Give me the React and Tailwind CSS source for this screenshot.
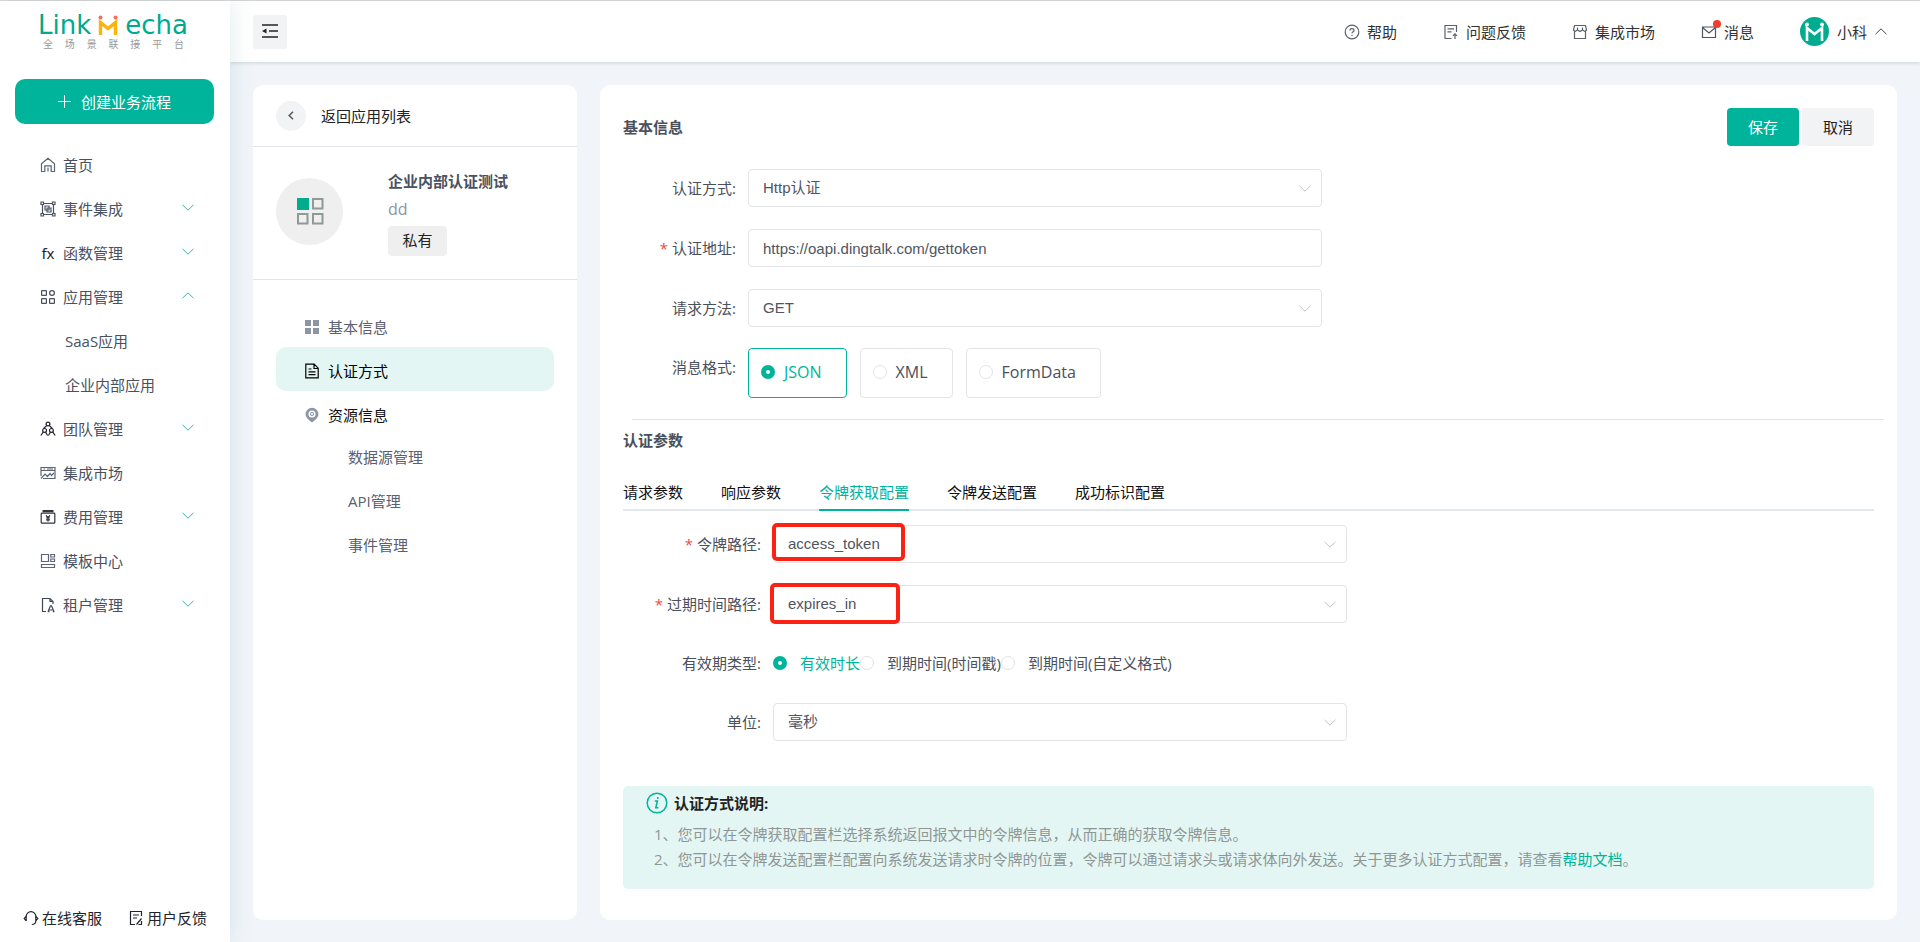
import { useState } from 'react';

const teal = '#00b39b';

function Svg({ size = 16, box = 16, className = '', children }) {
  return (
    <svg
      width={size}
      height={size}
      viewBox={`0 0 ${box} ${box}`}
      fill="none"
      stroke="currentColor"
      strokeWidth="1.2"
      className={`shrink-0 ${className}`}
      aria-hidden="true"
    >
      {children}
    </svg>
  );
}

const HomeIcon = () => (
  <Svg className="text-[#5b6577]">
    <path d="M1.500 6.800 8 1.200l6.500 5.600V14.500H11.200V8.800H4.800V14.500H1.500zM8 10.500v4" />
  </Svg>
);

const EventIcon = () => (
  <Svg className="text-[#4a5262]">
    <path d="M2.500 3v10M13.500 3v10M3 2.500h10M3 13.500h10" />
    <path d="M1 1h2.500v2.500H1zM12.500 1H15v2.500h-2.500zM1 12.500h2.500V15H1zM12.500 12.500H15V15h-2.500z" />
    <path d="M5 5h4v4H5zM7 7h4v4H7z" />
  </Svg>
);

const FxIcon = () => (
  <span className="w-4 shrink-0 text-center font-['Noto_Sans','Open_Sans',sans-serif] text-[15px] leading-4 text-[#1f2330]">
    fx
  </span>
);

const AppsIcon = () => (
  <Svg className="text-[#4a4f5a]">
    <rect x="1.600" y="1.600" width="4.800" height="4.800" rx="0.500" />
    <circle cx="12" cy="4" r="2.400" />
    <rect x="1.600" y="9.600" width="4.800" height="4.800" rx="0.500" />
    <rect x="9.600" y="9.600" width="4.800" height="4.800" rx="0.500" />
  </Svg>
);

const TeamIcon = () => (
  <Svg className="text-[#20242e]">
    <circle cx="8" cy="3" r="1.900" />
    <circle cx="4.600" cy="9.400" r="1.900" />
    <circle cx="11.400" cy="9.400" r="1.900" />
    <path d="M6.600 4.600 3.600 7.500M9.400 4.600l3 2.900M.8 14.500l2.600-3.700M7.600 14.500l-2-3.300M8.400 14.500l2-3.300M15.200 14.500l-2.600-3.700" />
  </Svg>
);

const MarketIcon = () => (
  <Svg className="text-[#5b6577]">
    <path d="M1 11V2.500h14v11H3M1 5.500h14M3.500 4h1.500M7 4h6" />
    <path d="m1 13.500 4-4.500 2.500 2.500L10 8.500l1.500 2L14 8" />
  </Svg>
);

const FeeIcon = () => (
  <Svg className="text-[#30343e]">
    <path d="M2.500 1.500h11M2.500 2.600h11" />
    <rect x="1.200" y="4.200" width="13.600" height="10" rx="0.800" />
    <path d="m6 6.500 2 2 2-2M8 8.500V12.500M6 9h4M6 10.800h4" />
  </Svg>
);

const TemplateIcon = () => (
  <Svg className="text-[#5b6577]">
    <path d="M1.500 1.500h7v7h-7zM10.800 1.500h3.700v2.500h-3.700zM10.800 6h3.700v2.500h-3.700zM1.500 11.500h13v3h-13z" />
  </Svg>
);

const TenantIcon = () => (
  <Svg className="text-[#3f4656]">
    <path d="M6 14.500H2.500v-13H10l3 3V7M10 1.500V4.500h3" />
    <path d="m8 14.800 2.500-6h1l2.500 6M9 13h4M8 14.600h1.500M12.800 14.600h1.700" />
  </Svg>
);

const HelpIcon = () => (
  <Svg className="text-[#59636b]">
    <circle cx="8" cy="8" r="6.800" />
    <path d="M6 6.400C6 4 10 4 10 6.400c0 1.300-2 1.400-2 2.900M8 10.800v1.200" />
  </Svg>
);

const NoteIcon = () => (
  <Svg className="text-[#59636b]">
    <path d="M8.500 14.500H2v-13h11.500V8M4.500 4.800h6.500M4.500 7.800h4M12 9.800V15M10 11.800l2-2 2 2" />
  </Svg>
);

const ShopIcon = () => (
  <Svg className="text-[#59636b]">
    <path d="M2.500 7.500v7h11v-7M2.500 1.500h11L14.500 6l-1.500 1.500L10.500 6 8 7.500 5.500 6 3 7.500 1.500 6zM5.500 3.500V6M10.500 3.500V6" />
  </Svg>
);

const MailIcon = () => (
  <Svg className="text-[#4b5563]">
    <path d="M1.500 3h13v10.500h-13zM1.500 3.500 8 9l6.500-5.500" />
  </Svg>
);

const HeadsetIcon = () => (
  <Svg className="text-[#20242e]">
    <path d="M3.200 11V6.500a4.800 4.800 0 0 1 9.600 0V11c0 2-1.500 3.500-4 3.500M3.200 6 1.200 8.500l2 2.500M12.800 6l2 2.500-2 2.500" />
  </Svg>
);

const FeedbackIcon = () => (
  <Svg className="text-[#20242e]">
    <path d="M13.500 6V1.500h-11v13H7M5 5h6M5 8h4M8.500 14.500l5-6M10.500 14.500h3V11" />
  </Svg>
);

const GridIcon = () => (
  <Svg className="text-[#8b95a5]">
    <path d="M1 1h6v6H1zM9 1h6v6H9zM1 9h6v6H1zM9 9h6v6H9z" fill="currentColor" stroke="none" />
  </Svg>
);

const DocIcon = () => (
  <Svg className="text-black">
    <path d="M1.800 1.200h8.400l4 4v9.600H1.800zM10 1.200v4.300h4.200M4.500 6h3M4.500 8.800h7M4.500 11.600h7" />
  </Svg>
);

const PinIcon = () => (
  <Svg>
    <path
      d="M8 .8a6.400 6.400 0 0 0-6.400 6.400C1.600 10.500 4.500 12.500 8 15.500c3.500-3 6.400-5 6.400-8.300A6.400 6.400 0 0 0 8 .8z"
      fill="#8b95a5"
      stroke="none"
    />
    <circle cx="8" cy="7" r="2.800" fill="#8b95a5" stroke="#fff" strokeWidth="1.600" />
    <circle cx="8" cy="7" r="1" fill="#fff" stroke="none" />
  </Svg>
);

function Chevron({ up = false, className = '' }) {
  return (
    <svg width="12" height="7" viewBox="0 0 12 7" fill="none" stroke="currentColor" className={`shrink-0 ${className}`} aria-hidden="true">
      <path d={up ? 'M.5 6.200 6 .8l5.500 5.400' : 'M.5.8 6 6.200 11.500.8'} />
    </svg>
  );
}

function Logo() {
  return (
    <div className="ml-[38px] w-[150px]">
      <div className="flex h-6 items-end justify-between font-['DejaVu_Sans',sans-serif] text-[26px] leading-6 text-[#00a98f]">
        <span>Link</span>
        <svg width="20" height="20" viewBox="0 0 20 20" fill="none" className="mb-[2px] shrink-0" aria-hidden="true">
          <path d="M2.500 20V7.500l7.500 6 7.500-6V20" stroke="#f9b50b" strokeWidth="3.400" />
          <circle cx="2.500" cy="2.500" r="2" fill="#f4705c" />
          <circle cx="17.500" cy="2.500" r="2" fill="#f4705c" />
        </svg>
        <span>echa</span>
      </div>
      <div className="mt-px mr-1 ml-[5px] flex justify-between text-[10px] leading-3 text-[#999]">
        {['全', '场', '景', '联', '接', '平', '台'].map((c) => (
          <span key={c}>{c}</span>
        ))}
      </div>
    </div>
  );
}

const menu = [
  { label: '首页', icon: HomeIcon },
  { label: '事件集成', icon: EventIcon, arrow: 'down' },
  { label: '函数管理', icon: FxIcon, arrow: 'down' },
  { label: '应用管理', icon: AppsIcon, arrow: 'up', children: ['SaaS应用', '企业内部应用'] },
  { label: '团队管理', icon: TeamIcon, arrow: 'down' },
  { label: '集成市场', icon: MarketIcon },
  { label: '费用管理', icon: FeeIcon, arrow: 'down' },
  { label: '模板中心', icon: TemplateIcon },
  { label: '租户管理', icon: TenantIcon, arrow: 'down' },
];

function Sidebar() {
  return (
    <aside className="relative z-10 flex w-[230px] shrink-0 flex-col bg-white pt-3 shadow-[0_0_24px_rgba(0,80,90,0.12)]">
      <Logo />
      <button className="mr-4 ml-[15px] mt-[29px] flex h-[45px] items-center justify-center gap-[10px] rounded-[10px] bg-[#00b39b] text-white">
        <svg width="13" height="13" viewBox="0 0 13 13" stroke="currentColor" aria-hidden="true">
          <path d="M6.500 0v13M0 6.500h13" />
        </svg>
        创建业务流程
      </button>
      <nav className="mt-[19px] text-[#495060]">
        {menu.map(({ label, icon: Icon, arrow, children }) => (
          <div key={label}>
            <a href="#" className="flex h-11 items-center pr-9 pl-10">
              <Icon />
              <span className="ml-[7px] flex-1">{label}</span>
              {arrow && <Chevron up={arrow === 'up'} className="mb-[3px] text-[#2fb8a4]" />}
            </a>
            {children?.map((c) => (
              <a key={c} href="#" className="flex h-11 items-center pl-[65px]">
                {c}
              </a>
            ))}
          </div>
        ))}
      </nav>
      <div className="mt-auto flex justify-between px-[23px] pb-[13px] text-[#20242e]">
        <a href="#" className="flex items-center gap-[3px]">
          <HeadsetIcon />
          在线客服
        </a>
        <a href="#" className="flex items-center gap-[3px]">
          <FeedbackIcon />
          用户反馈
        </a>
      </div>
    </aside>
  );
}

function Header() {
  return (
    <header className="flex h-[61px] items-center justify-between bg-white pr-[33px] pl-[23px] shadow-[0_1px_4px_rgba(0,40,60,0.16)]">
      <button aria-label="收起菜单" className="flex size-[34px] items-center justify-center rounded-[3px] bg-[#f2f3f5] text-[#1f2329]">
        <svg width="18" height="14" viewBox="0 0 18 14" stroke="currentColor" strokeWidth="1.600" className="mb-[2px]" aria-hidden="true">
          <path d="M1 1h16M8 7h9M1 13h16" />
          <path d="M5.500 4.500v5L1 7z" fill="currentColor" stroke="none" />
        </svg>
      </button>
      <div className="flex items-center gap-[46px] text-[#333]">
        <a href="#" className="flex items-center gap-[7px]">
          <HelpIcon />
          帮助
        </a>
        <a href="#" className="flex items-center gap-[7px]">
          <NoteIcon />
          问题反馈
        </a>
        <a href="#" className="flex items-center gap-[7px]">
          <ShopIcon />
          集成市场
        </a>
        <a href="#" className="relative flex items-center gap-[7px]">
          <MailIcon />
          消息
          <span className="absolute -top-px left-3 size-2 rounded-full bg-[#f03e2d]" />
        </a>
        <button className="flex items-center gap-2">
          <svg width="29" height="29" viewBox="0 0 29 29" fill="none" aria-hidden="true">
            <circle cx="14.500" cy="14.500" r="14.500" fill="#00ab8e" />
            <path d="M7 24V11l7.500 6 7.500-6v13" stroke="#fff" strokeWidth="2.600" />
            <circle cx="7" cy="7.500" r="1.900" fill="#fff" />
            <circle cx="22" cy="7.500" r="1.900" fill="#fff" />
          </svg>
          小科
          <Chevron up className="text-[#444]" />
        </button>
      </div>
    </header>
  );
}

function AppPanel() {
  return (
    <section className="w-[324px] shrink-0 rounded-[10px] bg-white">
      <div className="flex h-[62px] items-center gap-[15px] border-b border-[#e2e4ed] px-[23px] text-[#222]">
        <button aria-label="返回" className="flex size-[30px] items-center justify-center rounded-full bg-[#f2f3f5]">
          <svg width="6" height="9" viewBox="0 0 6 9" fill="none" stroke="#555d66" strokeWidth="1.600" aria-hidden="true">
            <path d="M5 .8 1.200 4.500 5 8.200" />
          </svg>
        </button>
        返回应用列表
      </div>
      <div className="flex h-[133px] items-center border-b border-[#e2e4ed] px-[23px] pb-1">
        <div className="flex size-[67px] items-center justify-center rounded-full bg-[#efefef]">
          <svg width="28" height="28" viewBox="0 0 28 28" fill="none" stroke="#8f9a97" strokeWidth="2" aria-hidden="true">
            <path d="M1 1h12v12H1z" fill="#00ab8e" stroke="none" />
            <path d="M17 2h9.500v9.500H17zM2 17h9.500v9.500H2zM17 17h9.500v9.500H17z" />
          </svg>
        </div>
        <div className="ml-[45px] pt-1">
          <h2 className="font-bold text-[#4a5162]">企业内部认证测试</h2>
          <p className="mt-[6px] text-base leading-[22px] text-[#8a94a6]">dd</p>
          <span className="mt-[6px] flex h-[30px] w-[59px] items-center justify-center rounded bg-[#efefef] pb-[2px] text-[#222]">私有</span>
        </div>
      </div>
      <nav className="px-[23px] pt-[23px] text-[#5a6070]">
        <a href="#" className="flex h-11 items-center gap-2 pt-1 pl-7">
          <GridIcon />
          基本信息
        </a>
        <a href="#" className="flex h-11 items-center gap-2 rounded-[10px] bg-[#e4f6f4] pt-1 pl-7 text-black">
          <DocIcon />
          认证方式
        </a>
        <a href="#" className="flex h-11 items-center gap-2 pt-1 pl-7 text-[#111]">
          <PinIcon />
          资源信息
        </a>
        {['数据源管理', 'API管理', '事件管理'].map((t) => (
          <a key={t} href="#" className="flex h-11 items-center pl-[72px]">
            {t}
          </a>
        ))}
      </nav>
    </section>
  );
}

const controlClass =
  "h-full w-full appearance-none rounded border border-[#e2e4e8] bg-white px-[14px] font-['Liberation_Sans','Noto_Sans_CJK_SC',sans-serif] text-[15px] text-[#50555f] outline-none";

function FormRow({ id, label, required, labelWidth, children }) {
  return (
    <div className="flex h-[38px] items-center">
      <label htmlFor={id} className={`${labelWidth} shrink-0 pr-3 text-right`}>
        {required && <span className="mr-1 text-[#f5483b]">*</span>}
        {label}:
      </label>
      {children}
    </div>
  );
}

function SelectBox({ id, value, children }) {
  return (
    <div className="relative h-[38px] w-[574px]">
      <select id={id} defaultValue={value} className={controlClass}>
        <option>{value}</option>
      </select>
      <Chevron className="pointer-events-none absolute top-4 right-[11px] text-[#bcc2cc]" />
      {children}
    </div>
  );
}

const radioClass =
  'size-[14px] shrink-0 appearance-none rounded-full border border-[#e0e3e8] bg-white checked:border-[5px] checked:border-[#00b39b]';

const tabs = ['请求参数', '响应参数', '令牌获取配置', '令牌发送配置', '成功标识配置'];

function AuthPanel() {
  const [format, setFormat] = useState('JSON');
  const [expire, setExpire] = useState('有效时长');
  const [tab, setTab] = useState('令牌获取配置');

  return (
    <section className="flex-1 rounded-[10px] bg-white px-[23px] pt-[23px] pb-[30px] text-[#4a505c]">
      <div className="flex h-[38px] items-center justify-between">
        <h2 className="font-bold">基本信息</h2>
        <div className="flex gap-[3px]">
          <button className="h-[38px] w-[72px] rounded bg-[#00b39b] text-white">保存</button>
          <button className="h-[38px] w-[72px] rounded bg-[#f2f3f5] text-[#222]">取消</button>
        </div>
      </div>

      <div className="mt-[23px] flex flex-col gap-[22px]">
        <FormRow id="auth" label="认证方式" labelWidth="w-[125px]">
          <SelectBox id="auth" value="Http认证" />
        </FormRow>
        <FormRow id="url" label="认证地址" required labelWidth="w-[125px]">
          <div className="h-[38px] w-[574px]">
            <input id="url" type="text" defaultValue="https://oapi.dingtalk.com/gettoken" className={controlClass} />
          </div>
        </FormRow>
        <FormRow id="method" label="请求方法" labelWidth="w-[125px]">
          <SelectBox id="method" value="GET" />
        </FormRow>
      </div>

      {/* Message format */}
      <div className="mt-[21px] flex">
        <span id="format-label" className="w-[125px] shrink-0 pt-2 pr-3 text-right">消息格式:</span>
        <div role="radiogroup" aria-labelledby="format-label" className="flex gap-[13px]">
          {['JSON', 'XML', 'FormData'].map((f) => (
            <label
              key={f}
              className={`flex h-[50px] items-center gap-[9px] rounded border pr-6 pb-[2px] pl-3 text-base ${
                format === f ? 'border-[#00b39b] text-[#00b39b]' : 'border-[#e2e4e8]'
              }`}
            >
              <input type="radio" name="format" checked={format === f} onChange={() => setFormat(f)} className={radioClass} />
              {f}
            </label>
          ))}
        </div>
      </div>

      <hr className="mt-[21px] -mr-[10px] ml-[9px] border-[#e2e4e8]" />
      <h2 className="mt-[9px] font-bold">认证参数</h2>

      <div role="tablist" className="mt-[21px] flex gap-[38px] border-b-2 border-[#e2e7ec] text-[#111]">
        {tabs.map((t) => (
          <button
            key={t}
            role="tab"
            aria-selected={tab === t}
            onClick={() => setTab(t)}
            className={`-mb-[2px] h-[39px] border-b-2 pt-[2px] ${
              tab === t ? 'border-[#00b39b] text-[#00b39b]' : 'border-transparent'
            }`}
          >
            {t}
          </button>
        ))}
      </div>

      <div className="mt-[14px] flex flex-col gap-[22px]">
        <FormRow id="token" label="令牌路径" required labelWidth="w-[150px]">
          <SelectBox id="token" value="access_token">
            <span className="pointer-events-none absolute -top-[2px] -left-px h-[38px] w-[133px] rounded-[5px] border-4 border-[#fb2113]" />
          </SelectBox>
        </FormRow>
        <FormRow id="expires" label="过期时间路径" required labelWidth="w-[150px]">
          <SelectBox id="expires" value="expires_in">
            <span className="pointer-events-none absolute -top-[2px] -left-[3px] h-[41px] w-[130px] rounded-[5px] border-4 border-[#fb2113]" />
          </SelectBox>
        </FormRow>
        <div className="flex h-9 items-center">
          <span id="expire-label" className="w-[150px] shrink-0 pr-3 text-right">有效期类型:</span>
          <div role="radiogroup" aria-labelledby="expire-label" className="flex">
            {['有效时长', '到期时间(时间戳)', '到期时间(自定义格式)'].map((e) => (
              <label key={e} className={`flex items-center gap-[13px] ${expire === e ? 'text-[#00b39b]' : ''}`}>
                <input type="radio" name="expire" checked={expire === e} onChange={() => setExpire(e)} className={radioClass} />
                {e}
              </label>
            ))}
          </div>
        </div>
        <FormRow id="unit" label="单位" labelWidth="w-[150px]">
          <SelectBox id="unit" value="毫秒" />
        </FormRow>
      </div>

      {/* Notes */}
      <div className="mt-[45px] rounded-[5px] bg-[#e4f6f4] px-[23px] pt-[6px] pb-[17px] text-[#8f9694]">
        <h3 className="flex items-center gap-[6px] font-bold text-[#222]">
          <svg width="22" height="22" viewBox="0 0 22 22" fill="none" stroke={teal} strokeWidth="1.500" aria-hidden="true">
            <circle cx="11" cy="11" r="9.800" />
            <path d="M8.800 9h2.600l-1.600 6.800h2.600" />
            <circle cx="11.800" cy="6" r="1" fill={teal} stroke="none" />
          </svg>
          认证方式说明:
        </h3>
        <ol className="mt-2 pl-2 leading-[25px]">
          <li>1、您可以在令牌获取配置栏选择系统返回报文中的令牌信息，从而正确的获取令牌信息。</li>
          <li>
            2、您可以在令牌发送配置栏配置向系统发送请求时令牌的位置，令牌可以通过请求头或请求体向外发送。关于更多认证方式配置，请查看
            <a href="#" className="text-[#00b39b]">帮助文档</a>。
          </li>
        </ol>
      </div>
    </section>
  );
}

export default function App() {
  return (
    <div className="flex min-h-screen border-t border-[#d9d9d9] bg-[#f1f5fa] font-['Open_Sans','Noto_Sans_CJK_SC',sans-serif] text-[15px] leading-[22px]">
      <Sidebar />
      <div className="flex min-w-0 flex-1 flex-col">
        <Header />
        <main className="flex flex-1 gap-[23px] px-[23px] pt-[23px] pb-[22px]">
          <AppPanel />
          <AuthPanel />
        </main>
      </div>
    </div>
  );
}
